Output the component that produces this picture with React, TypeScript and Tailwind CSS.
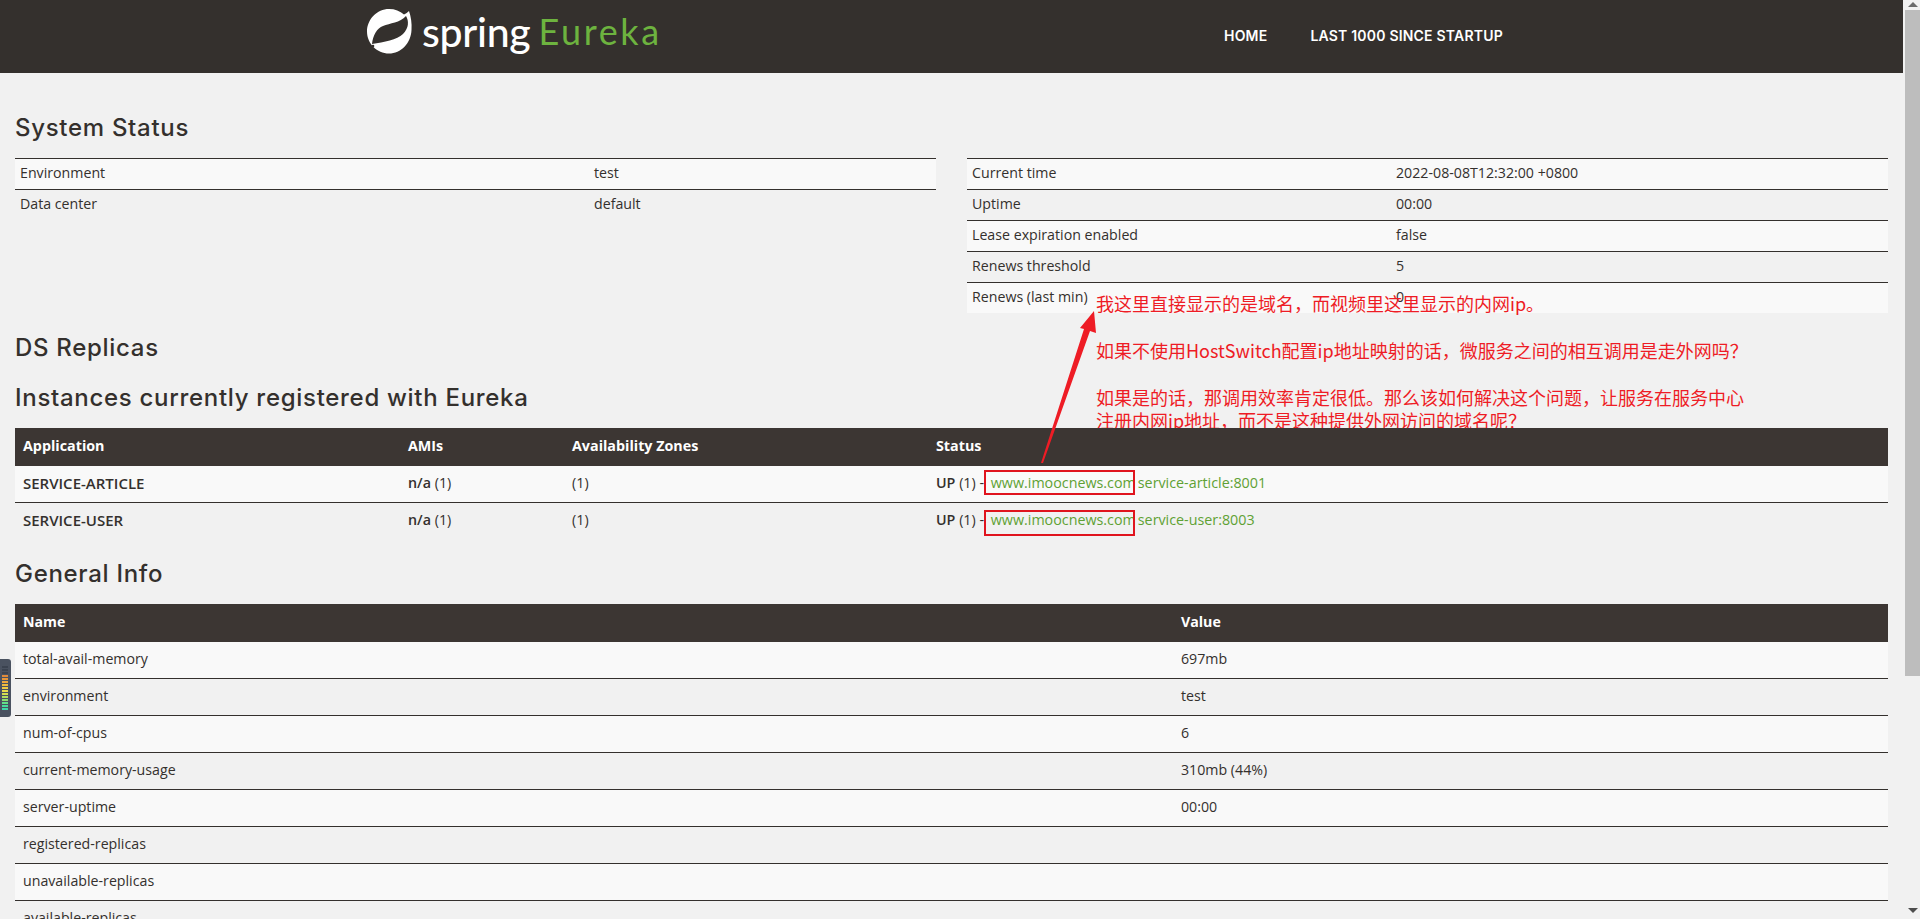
import React from 'react';

const bodyFont = "font-['Open_Sans','Noto_Sans_CJK_SC',sans-serif]";
const headFont = "font-['Inter','Open_Sans',sans-serif]";

const Heading = ({ children, className = '' }: { children: React.ReactNode; className?: string }) => (
  <h2 className={`${headFont} text-[24px] leading-[28px] font-medium tracking-[0.7px] text-[#34302d] ${className}`}>{children}</h2>
);

const KeyValueTable = ({ rows, keyWidth }: { rows: string[][]; keyWidth: string }) => (
  <table className="w-full table-fixed border-separate border-spacing-0 text-[14.2px] text-[#34302d]">
    <tbody>
      {rows.map((row, i) => (
        <tr key={row[0]} className={i % 2 === 0 ? 'bg-[#f9f9f9]' : ''}>
          <td className={`${keyWidth} h-[31px] border-t border-[#34302d] px-[5px] pb-[3px]`}>{row[0]}</td>
          <td className="h-[31px] border-t border-[#34302d] px-[5px] pb-[3px]">{row[1]}</td>
        </tr>
      ))}
    </tbody>
  </table>
);

const instances = [
  { name: 'SERVICE-ARTICLE', id: 'service-article:8001' },
  { name: 'SERVICE-USER', id: 'service-user:8003' },
];

const generalInfo = [
  ['total-avail-memory', '697mb'],
  ['environment', 'test'],
  ['num-of-cpus', '6'],
  ['current-memory-usage', '310mb (44%)'],
  ['server-uptime', '00:00'],
  ['registered-replicas', ''],
  ['unavailable-replicas', ''],
  ['available-replicas', ''],
];

const SpringLeaf = () => (
  <svg width="46" height="46" viewBox="0 0 46 46" className="shrink-0">
    <path d="M23 0c6 0 11 2 15 5.500 2-1 3.500-2 5-3.500 2 6 3 12 2.500 19C45 34 35 44.500 23 44.500 11 44.500 1 34.500 1 22.500S11 0 23 0z" fill="#fff" />
    <path d="M6 35C7 26 11 19 17 17 24 14 34 14 40 7 43 12 43 19 37 25 31 31 18 33 6 35z" fill="#34302d" />
    <circle cx="7" cy="37" r="1.300" fill="#34302d" />
  </svg>
);

// little level meter browser widget stuck to the left edge
const MeterWidget = () => {
  const colors = ['#3b4350', '#3b4350', '#3b4350', '#e08a3a', '#e8963a', '#eda83c', '#f0bb3e', '#f0cc44', '#e8dc4c', '#d4e050', '#b4e060', '#8ce070', '#62e088', '#48dc9c', '#40d8a8'];
  return (
    <div className="absolute left-0 top-[659px] flex h-[58px] w-[11px] flex-col items-start justify-center gap-[1px] rounded-r-[3px] bg-[#4a5260] pl-[2px]">
      {colors.map((c, i) => (
        <div key={i} className="h-[2px] w-[6px]" style={{ backgroundColor: c }} />
      ))}
    </div>
  );
};

const Annotation = () => (
  <>
    <div className="absolute left-[1096px] top-[292px] h-[136px] w-[700px] overflow-hidden font-['Noto_Sans_CJK_SC','Open_Sans',sans-serif] text-[18px] leading-[23.4px] text-[#ee1c25]">
      <p>我这里直接显示的是域名，而视频里这里显示的内网ip。</p>
      <p>&nbsp;</p>
      <p>如果不使用HostSwitch配置ip地址映射的话，微服务之间的相互调用是走外网吗？</p>
      <p>&nbsp;</p>
      <p>如果是的话，那调用效率肯定很低。那么该如何解决这个问题，让服务在服务中心</p>
      <p>注册内网ip地址，而不是这种提供外网访问的域名呢？</p>
    </div>
    <svg className="pointer-events-none absolute left-0 top-0" width="1905" height="919">
      <polygon points="1094,311 1096,333 1090,331 1043,463 1041,463 1084,329 1080,328" fill="#ee1c25" />
    </svg>
    <div className="absolute left-[984px] top-[470px] h-[25px] w-[151px] border-2 border-[#e0141e]" />
    <div className="absolute left-[984px] top-[510px] h-[26px] w-[151px] border-2 border-[#e0141e]" />
  </>
);

const Scrollbar = () => (
  <div className="flex h-full w-[15px] shrink-0 flex-col items-center bg-[#f1f1f1]">
    <div className="mt-[2px] h-0 w-0 border-x-[5px] border-b-[5px] border-x-transparent border-b-[#6b6b6b]" />
    <div className="mt-[3px] h-[666px] w-full bg-[#bdbdbd]" />
    <div className="mt-auto mb-[6px] h-0 w-0 border-x-[5px] border-t-[5px] border-x-transparent border-t-[#4d4d4d]" />
  </div>
);

export default function App() {
  return (
    <div className={`relative flex h-screen overflow-hidden bg-[#f1f1f1] ${bodyFont}`}>
      <div className="w-[1905px] shrink-0">
        <header className="flex h-[73px] w-[1903px] items-center bg-[#34302d]">
          <div className="mb-[9px] ml-[366px] flex w-[293px] shrink-0 items-center">
            <SpringLeaf />
            <span className="ml-[10px] font-['Lato',sans-serif] text-[41px] leading-[46px] font-medium tracking-[-0.3px] text-white">spring</span>
            <span className="mb-[3px] ml-[8px] font-['Lato',sans-serif] text-[36px] leading-[46px] tracking-[2.6px] text-[#6db33f]">Eureka</span>
          </div>
          <nav className={`${headFont} mb-[2px] ml-[565px] flex gap-[43px] text-[14px] font-semibold tracking-[0.2px] text-white uppercase`}>
            <a>Home</a>
            <a>Last 1000 since startup</a>
          </nav>
        </header>

        <main className="w-[1903px] px-[15px]">
          <Heading className="mt-[41px] mb-[16px]">System Status</Heading>
          <div className="flex items-start gap-[31px]">
            <div className="w-[921px]">
              <KeyValueTable keyWidth="w-[574px]" rows={[['Environment', 'test'], ['Data center', 'default']]} />
            </div>
            <div className="w-[921px]">
              <KeyValueTable
                keyWidth="w-[424px]"
                rows={[
                  ['Current time', '2022-08-08T12:32:00 +0800'],
                  ['Uptime', '00:00'],
                  ['Lease expiration enabled', 'false'],
                  ['Renews threshold', '5'],
                  ['Renews (last min)', '0'],
                ]}
              />
            </div>
          </div>

          <Heading className="mt-[21px] mb-[22px]">DS Replicas</Heading>
          <Heading className="mb-[16px]">Instances currently registered with Eureka</Heading>
          <table className="w-full table-fixed border-separate border-spacing-0 text-[14.3px] text-[#34302d]">
            <thead>
              <tr className="bg-[#3c3633] text-left text-white">
                <th className="h-[38px] w-[385px] pb-[3px] pl-[8px] font-bold">Application</th>
                <th className="w-[164px] pb-[3px] pl-[8px] font-bold">AMIs</th>
                <th className="w-[364px] pb-[3px] pl-[8px] font-bold">Availability Zones</th>
                <th className="pb-[3px] pl-[8px] font-bold">Status</th>
              </tr>
            </thead>
            <tbody>
              {instances.map((item, i) => (
                <tr key={item.name} className={i === 0 ? 'bg-[#f9f9f9]' : ''}>
                  <td className={`pb-[2px] pl-[8px] ${i === 0 ? 'h-[36px]' : 'h-[37px] border-t border-[#34302d]'}`}><b className="text-[15px] font-semibold">{item.name}</b></td>
                  <td className={`pb-[2px] pl-[8px] ${i === 0 ? '' : 'border-t border-[#34302d]'}`}><b className="font-semibold">n/a</b> (1)</td>
                  <td className={`pb-[2px] pl-[8px] ${i === 0 ? '' : 'border-t border-[#34302d]'}`}>(1)</td>
                  <td className={`pb-[2px] pl-[8px] ${i === 0 ? '' : 'border-t border-[#34302d]'}`}>
                    <b className="font-semibold">UP</b> (1) - <a className="ml-[3px] text-[#5fa134]">www.imoocnews.com</a><a className="ml-[2px] text-[#5fa134]">{item.id}</a>
                  </td>
                </tr>
              ))}
            </tbody>
          </table>

          <Heading className="mt-[21px] mb-[16px]">General Info</Heading>
          <table className="w-full table-fixed border-separate border-spacing-0 text-[14.2px] text-[#34302d]">
            <thead>
              <tr className="bg-[#3c3633] text-left text-white">
                <th className="h-[38px] w-[1158px] pb-[3px] pl-[8px] font-bold">Name</th>
                <th className="pb-[3px] pl-[8px] font-bold">Value</th>
              </tr>
            </thead>
            <tbody>
              {generalInfo.map((row, i) => (
                <tr key={row[0]} className={i % 2 === 0 ? 'bg-[#f9f9f9]' : ''}>
                  <td className={`pb-[2px] pl-[8px] ${i === 0 ? 'h-[36px]' : 'h-[37px] border-t border-[#34302d]'}`}>{row[0]}</td>
                  <td className={`pb-[2px] pl-[8px] ${i === 0 ? '' : 'border-t border-[#34302d]'}`}>{row[1]}</td>
                </tr>
              ))}
            </tbody>
          </table>
        </main>
      </div>
      <Scrollbar />
      <MeterWidget />
      <Annotation />
    </div>
  );
}
